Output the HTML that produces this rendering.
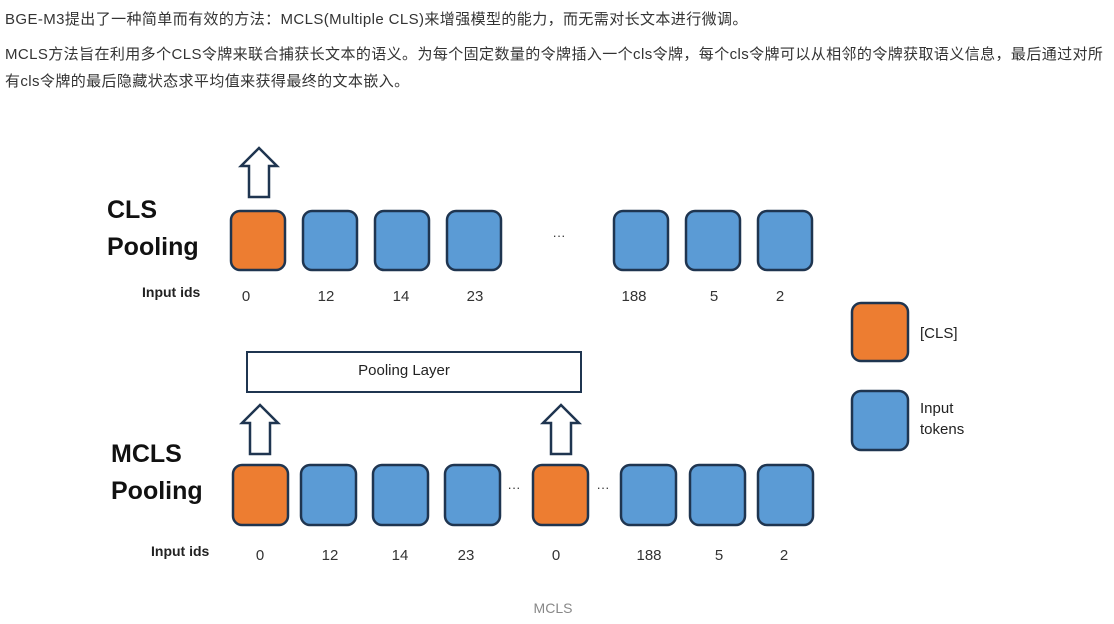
<!DOCTYPE html>
<html><head><meta charset="utf-8"><style>
html,body{margin:0;padding:0;background:#fff;width:1114px;height:624px;overflow:hidden;position:relative}
.t{position:absolute;left:5px;white-space:nowrap;font-family:"Liberation Sans","Noto Sans CJK SC",sans-serif;font-size:15px;letter-spacing:0.4px;color:#333;}
svg{position:absolute;left:0;top:0}
.h{font-family:"Liberation Sans","DejaVu Sans",sans-serif;}
</style></head><body>
<div class="t" style="top:8px">BGE-M3提出了一种简单而有效的方法：MCLS(Multiple CLS)来增强模型的能力，而无需对长文本进行微调。</div>
<div class="t" style="top:43px">MCLS方法旨在利用多个CLS令牌来联合捕获长文本的语义。为每个固定数量的令牌插入一个cls令牌，每个cls令牌可以从相邻的令牌获取语义信息，最后通过对所</div>
<div class="t" style="top:70px">有cls令牌的最后隐藏状态求平均值来获得最终的文本嵌入。</div>
<svg width="1114" height="624" viewBox="0 0 1114 624">
<defs>
<g id="arr"><path d="M9 50 V19 H1 L19 1 L37 19 H29 V50 Z" fill="#fff" stroke="#1f3550" stroke-width="2.5" stroke-linejoin="miter"/></g>
</defs>
<g stroke="#1f3550" stroke-width="2.5">
<rect x="231" y="211" width="54" height="59" rx="9" fill="#ed7d31"/>
<rect x="303" y="211" width="54" height="59" rx="9" fill="#5b9bd5"/>
<rect x="375" y="211" width="54" height="59" rx="9" fill="#5b9bd5"/>
<rect x="447" y="211" width="54" height="59" rx="9" fill="#5b9bd5"/>
<rect x="614" y="211" width="54" height="59" rx="9" fill="#5b9bd5"/>
<rect x="686" y="211" width="54" height="59" rx="9" fill="#5b9bd5"/>
<rect x="758" y="211" width="54" height="59" rx="9" fill="#5b9bd5"/>
<rect x="233" y="465" width="55" height="60" rx="9" fill="#ed7d31"/>
<rect x="301" y="465" width="55" height="60" rx="9" fill="#5b9bd5"/>
<rect x="373" y="465" width="55" height="60" rx="9" fill="#5b9bd5"/>
<rect x="445" y="465" width="55" height="60" rx="9" fill="#5b9bd5"/>
<rect x="533" y="465" width="55" height="60" rx="9" fill="#ed7d31"/>
<rect x="621" y="465" width="55" height="60" rx="9" fill="#5b9bd5"/>
<rect x="690" y="465" width="55" height="60" rx="9" fill="#5b9bd5"/>
<rect x="758" y="465" width="55" height="60" rx="9" fill="#5b9bd5"/>
<rect x="852" y="303" width="56" height="58" rx="9" fill="#ed7d31"/>
<rect x="852" y="391" width="56" height="59" rx="9" fill="#5b9bd5"/>
<rect x="247" y="352" width="334" height="40" fill="#fff" stroke-width="2"/>
</g>
<use href="#arr" x="240" y="147"/>
<use href="#arr" x="241" y="404"/>
<use href="#arr" x="542" y="404"/>
<g class="h" fill="#111" font-weight="bold" font-size="25">
<text x="107" y="218">CLS</text>
<text x="107" y="255">Pooling</text>
<text x="111" y="462">MCLS</text>
<text x="111" y="499">Pooling</text>
</g>
<g class="h" fill="#222" font-size="15">
<text x="142" y="297" font-weight="bold" font-size="14">Input ids</text>
<text x="151" y="556" font-weight="bold" font-size="14">Input ids</text>
<text x="404" y="375" text-anchor="middle" font-size="15">Pooling Layer</text>
<text x="920" y="338">[CLS]</text>
<text x="920" y="413">Input</text>
<text x="920" y="434">tokens</text>
</g>
<g class="h" fill="#333" font-size="15" text-anchor="middle">
<text x="246" y="301">0</text><text x="326" y="301">12</text><text x="401" y="301">14</text><text x="475" y="301">23</text>
<text x="634" y="301">188</text><text x="714" y="301">5</text><text x="780" y="301">2</text>
<text x="260" y="560">0</text><text x="330" y="560">12</text><text x="400" y="560">14</text><text x="466" y="560">23</text>
<text x="556" y="560">0</text><text x="649" y="560">188</text><text x="719" y="560">5</text><text x="784" y="560">2</text>
<text x="559" y="240" font-size="13">···</text>
<text x="514" y="492" font-size="13">···</text>
<text x="603" y="492" font-size="13">···</text>
</g>
<text x="553" y="613" text-anchor="middle" class="h" font-size="14" fill="#888">MCLS</text>
</svg>
</body></html>
